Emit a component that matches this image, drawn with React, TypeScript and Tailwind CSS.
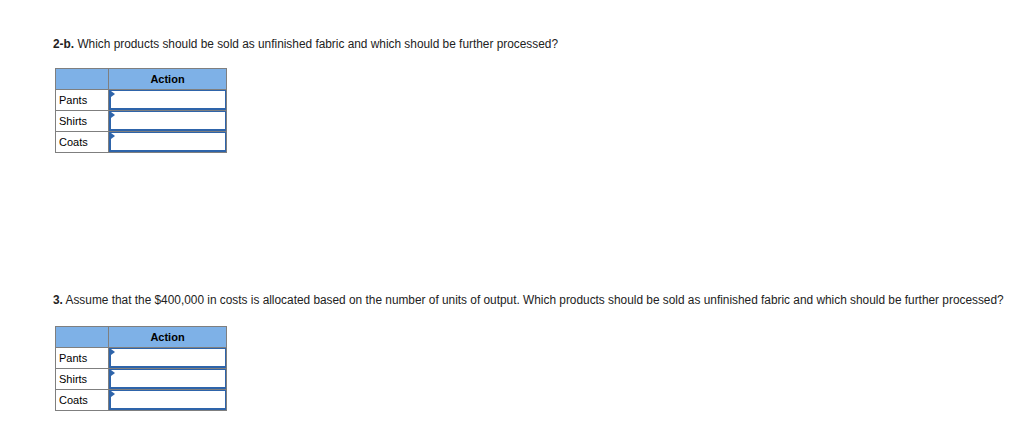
const products = ["Pants", "Shirts", "Coats"]

function ActionTable() {
  return (
    <table className="border-collapse text-[11px] text-black">
      <thead>
        <tr className="h-[21px]">
          <th className="w-[53px] border border-[#7f7f7f] bg-[#7eb1e7]"></th>
          <th className="w-[118px] border border-[#7f7f7f] bg-[#7eb1e7] font-bold text-center">Action</th>
        </tr>
      </thead>
      <tbody>
        {products.map((p) => (
          <tr key={p} className="h-[21px]">
            <td className="border border-[#7f7f7f] px-[3px] text-left align-middle">{p}</td>
            <td className="border border-[#7f7f7f] p-0">
              <div className="relative h-[20px] w-full border border-b-2 border-l-2 border-[#2e64aa] bg-white">
                <svg className="absolute left-0 top-0" width="4" height="6" viewBox="0 0 4 6">
                  <path d="M0 0 L4 3 L0 6 Z" fill="#2e64aa" />
                </svg>
              </div>
            </td>
          </tr>
        ))}
      </tbody>
    </table>
  )
}

export default function App() {
  return (
    <div className="min-h-[437px] w-[1024px] bg-white pl-[53px] pt-[37px] font-['Liberation_Sans',Arial,sans-serif] text-[11.87px] leading-[14px] text-[#222]">
      <p>
        <span className="font-bold">2-b.</span> Which products should be sold as unfinished fabric and which should be further processed?
      </p>
      <div className="mt-[17px] ml-[2px]">
        <ActionTable />
      </div>

      <p className="mt-[140px]">
        <span className="font-bold">3.</span> Assume that the $400,000 in costs is allocated based on the number of units of output. Which products should be sold as unfinished fabric and which should be further processed?
      </p>
      <div className="mt-[19px] ml-[2px]">
        <ActionTable />
      </div>
    </div>
  )
}
